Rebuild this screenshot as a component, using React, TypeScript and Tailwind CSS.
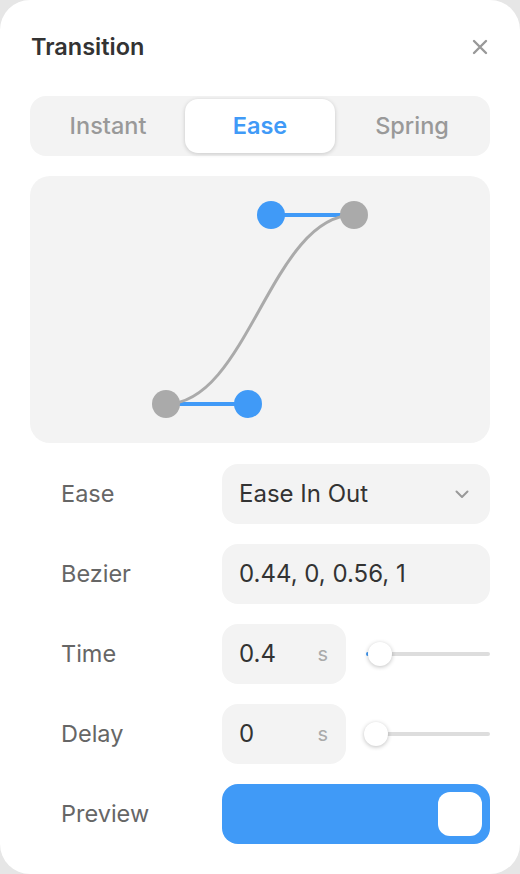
import React from 'react';

const BLUE = '#409af7';

const Row: React.FC<{ label: string; children: React.ReactNode }> = ({ label, children }) => (
  <div className="flex items-center h-[60px]">
    <div className="w-[192px] pl-[31px] text-[23.5px] text-[#666666]">{label}</div>
    <div className="flex-1 flex items-center h-full">{children}</div>
  </div>
);

const Field: React.FC<{ className?: string; children: React.ReactNode }> = ({ className = '', children }) => (
  <div className={`h-full bg-[#f3f3f3] rounded-[16px] flex items-center px-[17px] text-[24px] text-[#333333] ${className}`}>
    {children}
  </div>
);

const Slider: React.FC<{ thumbLeft: number; fill: number }> = ({ thumbLeft, fill }) => (
  <div className="relative flex-1 ml-[20px] h-[24px] flex items-center">
    <div className="w-full h-[4px] rounded-full bg-[#dddddd]" />
    <div className="absolute left-0 h-[4px] rounded-full" style={{ width: fill, backgroundColor: BLUE }} />
    <div
      className="absolute top-0 w-[24px] h-[24px] rounded-full bg-white shadow-[0_1px_4px_rgba(0,0,0,0.25)]"
      style={{ left: thumbLeft }}
    />
  </div>
);

export default function App() {
  return (
    <div className="w-[520px] h-[874px] bg-[#e6e6e6]" style={{ fontFamily: 'Inter, "Noto Sans", sans-serif' }}>
      <div className="h-full bg-white rounded-[30px] px-[30px] pt-[31px]">
        <div className="flex items-center justify-between h-[32px]">
          <h3 className="pl-[1px] text-[23.5px] font-semibold text-[#333333]">Transition</h3>
          <button type="button" aria-label="Close" className="mr-[1px] w-[18px] h-[18px] flex items-center justify-center">
            <svg width="16" height="16" viewBox="0 0 16 16">
              <path d="M2 2 L14 14 M14 2 L2 14" stroke="#999999" strokeWidth="2.4" strokeLinecap="round" />
            </svg>
          </button>
        </div>

        <div className="mt-[33px] h-[60px] p-[3px] bg-[#f3f3f3] rounded-[16px] grid grid-cols-3 gap-[2px] text-[23.5px] font-medium">
          <div className="flex items-center justify-center text-[#999999]">Instant</div>
          <div
            className="flex items-center justify-center bg-white rounded-[13px] shadow-[0_1px_4px_rgba(0,0,0,0.18)] font-semibold"
            style={{ color: BLUE }}
          >
            Ease
          </div>
          <div className="flex items-center justify-center text-[#999999]">Spring</div>
        </div>

        <div className="mt-[20px] h-[267px] bg-[#f3f3f3] rounded-[20px]">
          <svg width="460" height="267" viewBox="0 0 460 267">
            <line x1="136" y1="228" x2="218" y2="228" stroke={BLUE} strokeWidth="4" />
            <line x1="324" y1="39" x2="241" y2="39" stroke={BLUE} strokeWidth="4" />
            <path d="M136 228 C218 228 241 39 324 39" fill="none" stroke="#aaaaaa" strokeWidth="3" />
            <circle cx="136" cy="228" r="14" fill="#aaaaaa" />
            <circle cx="324" cy="39" r="14" fill="#aaaaaa" />
            <circle cx="218" cy="228" r="14" fill={BLUE} />
            <circle cx="241" cy="39" r="14" fill={BLUE} />
          </svg>
        </div>

        <div className="mt-[21px] flex flex-col gap-[20px]">
          <Row label="Ease">
            <Field className="flex-1 justify-between">
              <span>Ease In Out</span>
              <svg width="14" height="9" viewBox="0 0 14 9" className="mr-[4px]">
                <path d="M1.5 1.5 L7 7 L12.5 1.5" fill="none" stroke="#999999" strokeWidth="2" strokeLinecap="round" strokeLinejoin="round" />
              </svg>
            </Field>
          </Row>
          <Row label="Bezier">
            <Field className="flex-1">0.44, 0, 0.56, 1</Field>
          </Row>
          <Row label="Time">
            <Field className="w-[124px] justify-between">
              <span>0.4</span>
              <span className="text-[20px] text-[#aaaaaa] pr-[1px]">s</span>
            </Field>
            <Slider thumbLeft={2} fill={6} />
          </Row>
          <Row label="Delay">
            <Field className="w-[124px] justify-between">
              <span>0</span>
              <span className="text-[20px] text-[#aaaaaa] pr-[1px]">s</span>
            </Field>
            <Slider thumbLeft={-2} fill={0} />
          </Row>
          <Row label="Preview">
            <div className="flex-1 h-full rounded-[16px] flex items-center justify-end pr-[8px]" style={{ backgroundColor: BLUE }}>
              <div className="w-[44px] h-[44px] bg-white rounded-[12px]" />
            </div>
          </Row>
        </div>
      </div>
    </div>
  );
}
